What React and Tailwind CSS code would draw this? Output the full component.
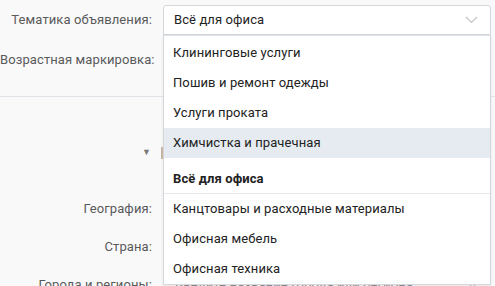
import React from "react";

const font = { fontFamily: "Roboto, 'Liberation Sans', sans-serif" };

function Chevron() {
  return (
    <svg width="13" height="8" viewBox="0 0 13 8">
      <path d="M1 1l5.5 5.5L12 1" fill="none" stroke="#bfc3c8" strokeWidth="1.1" />
    </svg>
  );
}

function Row({ label, children, className = "" }) {
  return (
    <div className={`flex items-center h-[30px] shrink-0 ${className}`}>
      <div className="w-[152px] shrink-0 text-right text-[13px] text-[#5a5a5a] whitespace-nowrap">{label}</div>
      <div className="ml-[11px] w-[328px] h-full">{children}</div>
    </div>
  );
}

export default function App() {
  const items1 = ["Клининговые услуги", "Пошив и ремонт одежды", "Услуги проката", "Химчистка и прачечная"];
  const items2 = ["Канцтовары и расходные материалы", "Офисная мебель", "Офисная техника"];
  return (
    <div className="relative w-[495px] h-[286px] overflow-hidden bg-[#f9f9fa] tracking-[0.1px]" style={font}>
      <div className="flex flex-col pt-[5px]">
        <Row label="Тематика объявления:">
          <div className="relative h-[30px] border border-[#d3d7dc] rounded-t-[3px] bg-white flex items-center justify-between pl-[10px] pr-[12px] text-[13px] text-[#222]">
            <span>Всё для офиса</span>
            <Chevron />
            <div className="absolute left-[-1px] top-[29px] w-[328px] bg-white border border-[#d3d7dc] border-t-[#dfe2e6] text-[13px] text-[#222] shadow-[0_1px_3px_rgba(0,0,0,0.08)] z-10">
              <div className="pt-[2px]">
                {items1.map((t, i) => (
                  <div key={t} className={`h-[30px] flex items-center pl-[9px] ${i === 3 ? "bg-[#e5ebf1]" : ""}`}>{t}</div>
                ))}
              </div>
              <div className="h-[36px] pt-[6px] flex items-center pl-[9px] font-bold border-b border-[#e7e8ec]">Всё для офиса</div>
              {items2.map((t) => (
                <div key={t} className="h-[30px] flex items-center pl-[9px]">{t}</div>
              ))}
            </div>
          </div>
        </Row>
        <Row label="Возрастная маркировка:" className="h-[50px]">
          <div />
        </Row>
        <div className="mt-[11px] h-px bg-[#e1e4e8]" />
        <div className="mt-[41px] h-[30px] flex items-center">
          <div className="w-[152px] flex justify-end">
            <span className="text-[9px] text-[#7a7a7a] mr-[1px]">▼</span>
          </div>
          <div className="ml-[9px] w-[2px] h-[12px] bg-[#c9b9a6]" />
        </div>
        <Row label="География:" className="mt-[26px]">
          <div />
        </Row>
        <Row label="Страна:" className="mt-[8px]">
          <div />
        </Row>
        <Row label="Города и регионы:" className="mt-[8px]">
          <div className="h-[30px] flex items-center justify-between pl-[12px] pr-[12px] text-[13px] text-[#8c8f94]">
            <span>Введите название города или региона</span>
            <Chevron />
          </div>
        </Row>
      </div>
    </div>
  );
}
